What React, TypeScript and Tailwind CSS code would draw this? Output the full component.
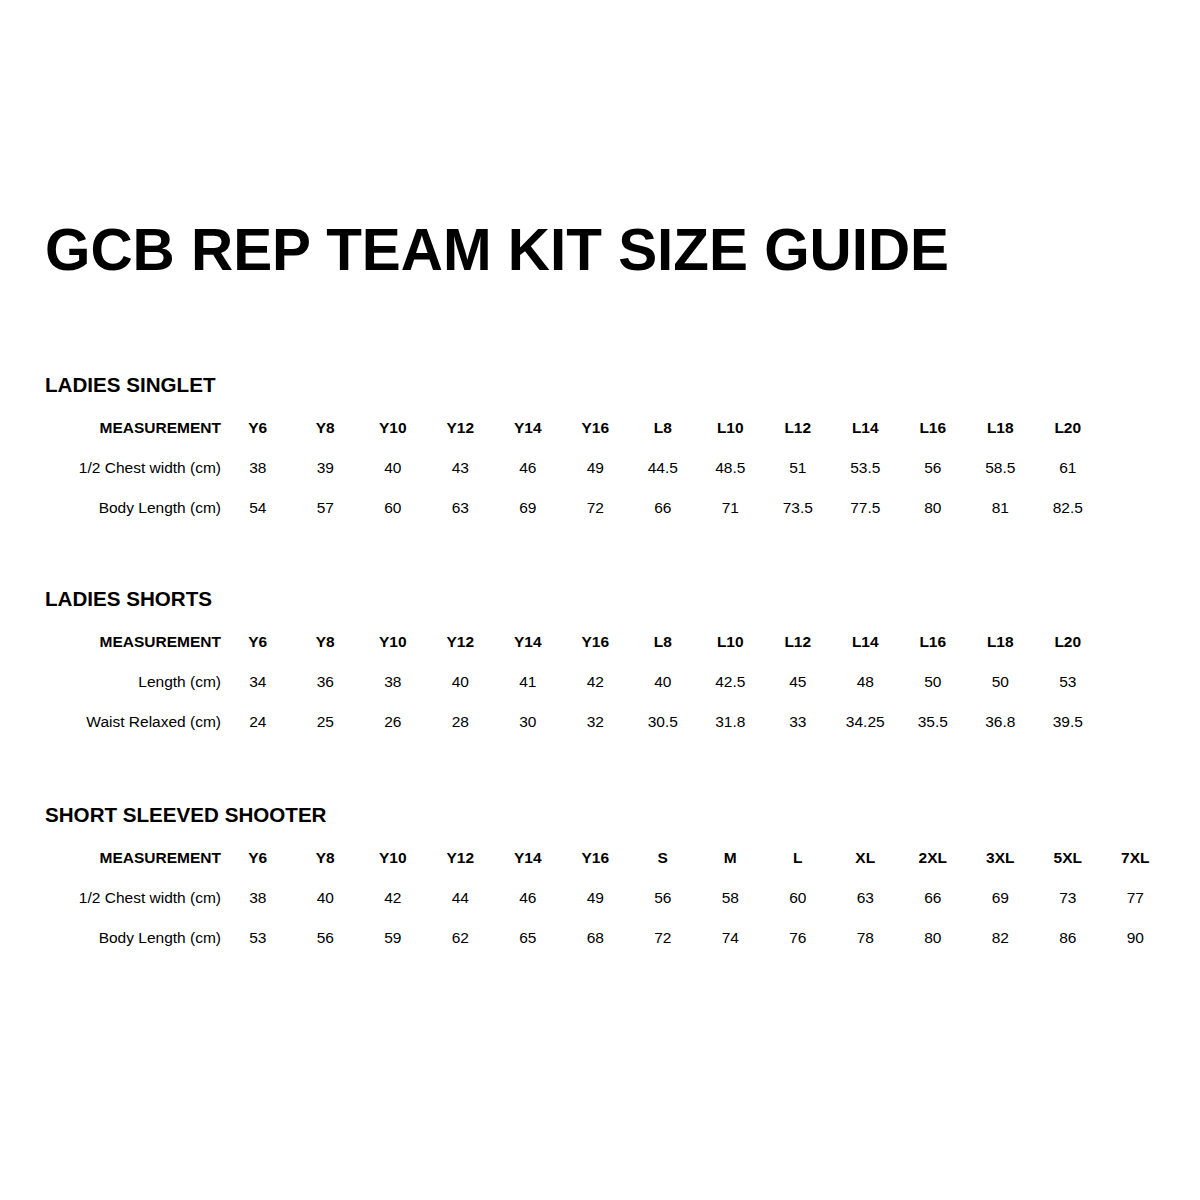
import React from "react";

interface SizeTable {
    title: string;
    sizes: string[];
    rows: { label: string; values: string[] }[];
    gap: string;
}

const youth = ["Y6", "Y8", "Y10", "Y12", "Y14", "Y16"];
const ladies = ["L8", "L10", "L12", "L14", "L16", "L18", "L20"];

const tables: SizeTable[] = [
    {
        title: "LADIES SINGLET",
        sizes: [...youth, ...ladies],
        rows: [
            { label: "1/2 Chest width (cm)", values: ["38", "39", "40", "43", "46", "49", "44.5", "48.5", "51", "53.5", "56", "58.5", "61"] },
            { label: "Body Length (cm)", values: ["54", "57", "60", "63", "69", "72", "66", "71", "73.5", "77.5", "80", "81", "82.5"] },
        ],
        gap: "mt-[92px]",
    },
    {
        title: "LADIES SHORTS",
        sizes: [...youth, ...ladies],
        rows: [
            { label: "Length (cm)", values: ["34", "36", "38", "40", "41", "42", "40", "42.5", "45", "48", "50", "50", "53"] },
            { label: "Waist Relaxed (cm)", values: ["24", "25", "26", "28", "30", "32", "30.5", "31.8", "33", "34.25", "35.5", "36.8", "39.5"] },
        ],
        gap: "mt-[57px]",
    },
    {
        title: "SHORT SLEEVED SHOOTER",
        sizes: [...youth, "S", "M", "L", "XL", "2XL", "3XL", "5XL", "7XL"],
        rows: [
            { label: "1/2 Chest width (cm)", values: ["38", "40", "42", "44", "46", "49", "56", "58", "60", "63", "66", "69", "73", "77"] },
            { label: "Body Length (cm)", values: ["53", "56", "59", "62", "65", "68", "72", "74", "76", "78", "80", "82", "86", "90"] },
        ],
        gap: "mt-[59px]",
    },
];

function Table({ t }: { t: SizeTable }) {
    return (
        <section className={t.gap}>
            <h2 className="text-[20.6px] leading-[28px] font-bold">{t.title}</h2>
            <div className="mt-[9px] grid grid-cols-[179px_repeat(14,67.5px)] text-[15.5px] leading-[40px]">
                <div className="text-right pr-[3px] font-bold">MEASUREMENT</div>
                {t.sizes.map((s) => (
                    <div key={s} className="text-center font-bold">{s}</div>
                ))}
                {t.sizes.length < 14 && <div />}
                {t.rows.map((r) => (
                    <React.Fragment key={r.label}>
                        <div className="text-right pr-[3px] whitespace-nowrap">{r.label}</div>
                        {r.values.map((v, i) => (
                            <div key={i} className="text-center">{v}</div>
                        ))}
                        {r.values.length < 14 && <div />}
                    </React.Fragment>
                ))}
            </div>
        </section>
    );
}

export default function App() {
    return (
        <div className="w-[1200px] h-[1200px] bg-white text-black pl-[45px] pt-[221px] font-['Liberation_Sans',Arial,sans-serif]">
            <h1 className="text-[58.4px] leading-[58px] font-bold whitespace-nowrap">GCB REP TEAM KIT SIZE GUIDE</h1>
            {tables.map((t) => (
                <Table key={t.title} t={t} />
            ))}
        </div>
    );
}
